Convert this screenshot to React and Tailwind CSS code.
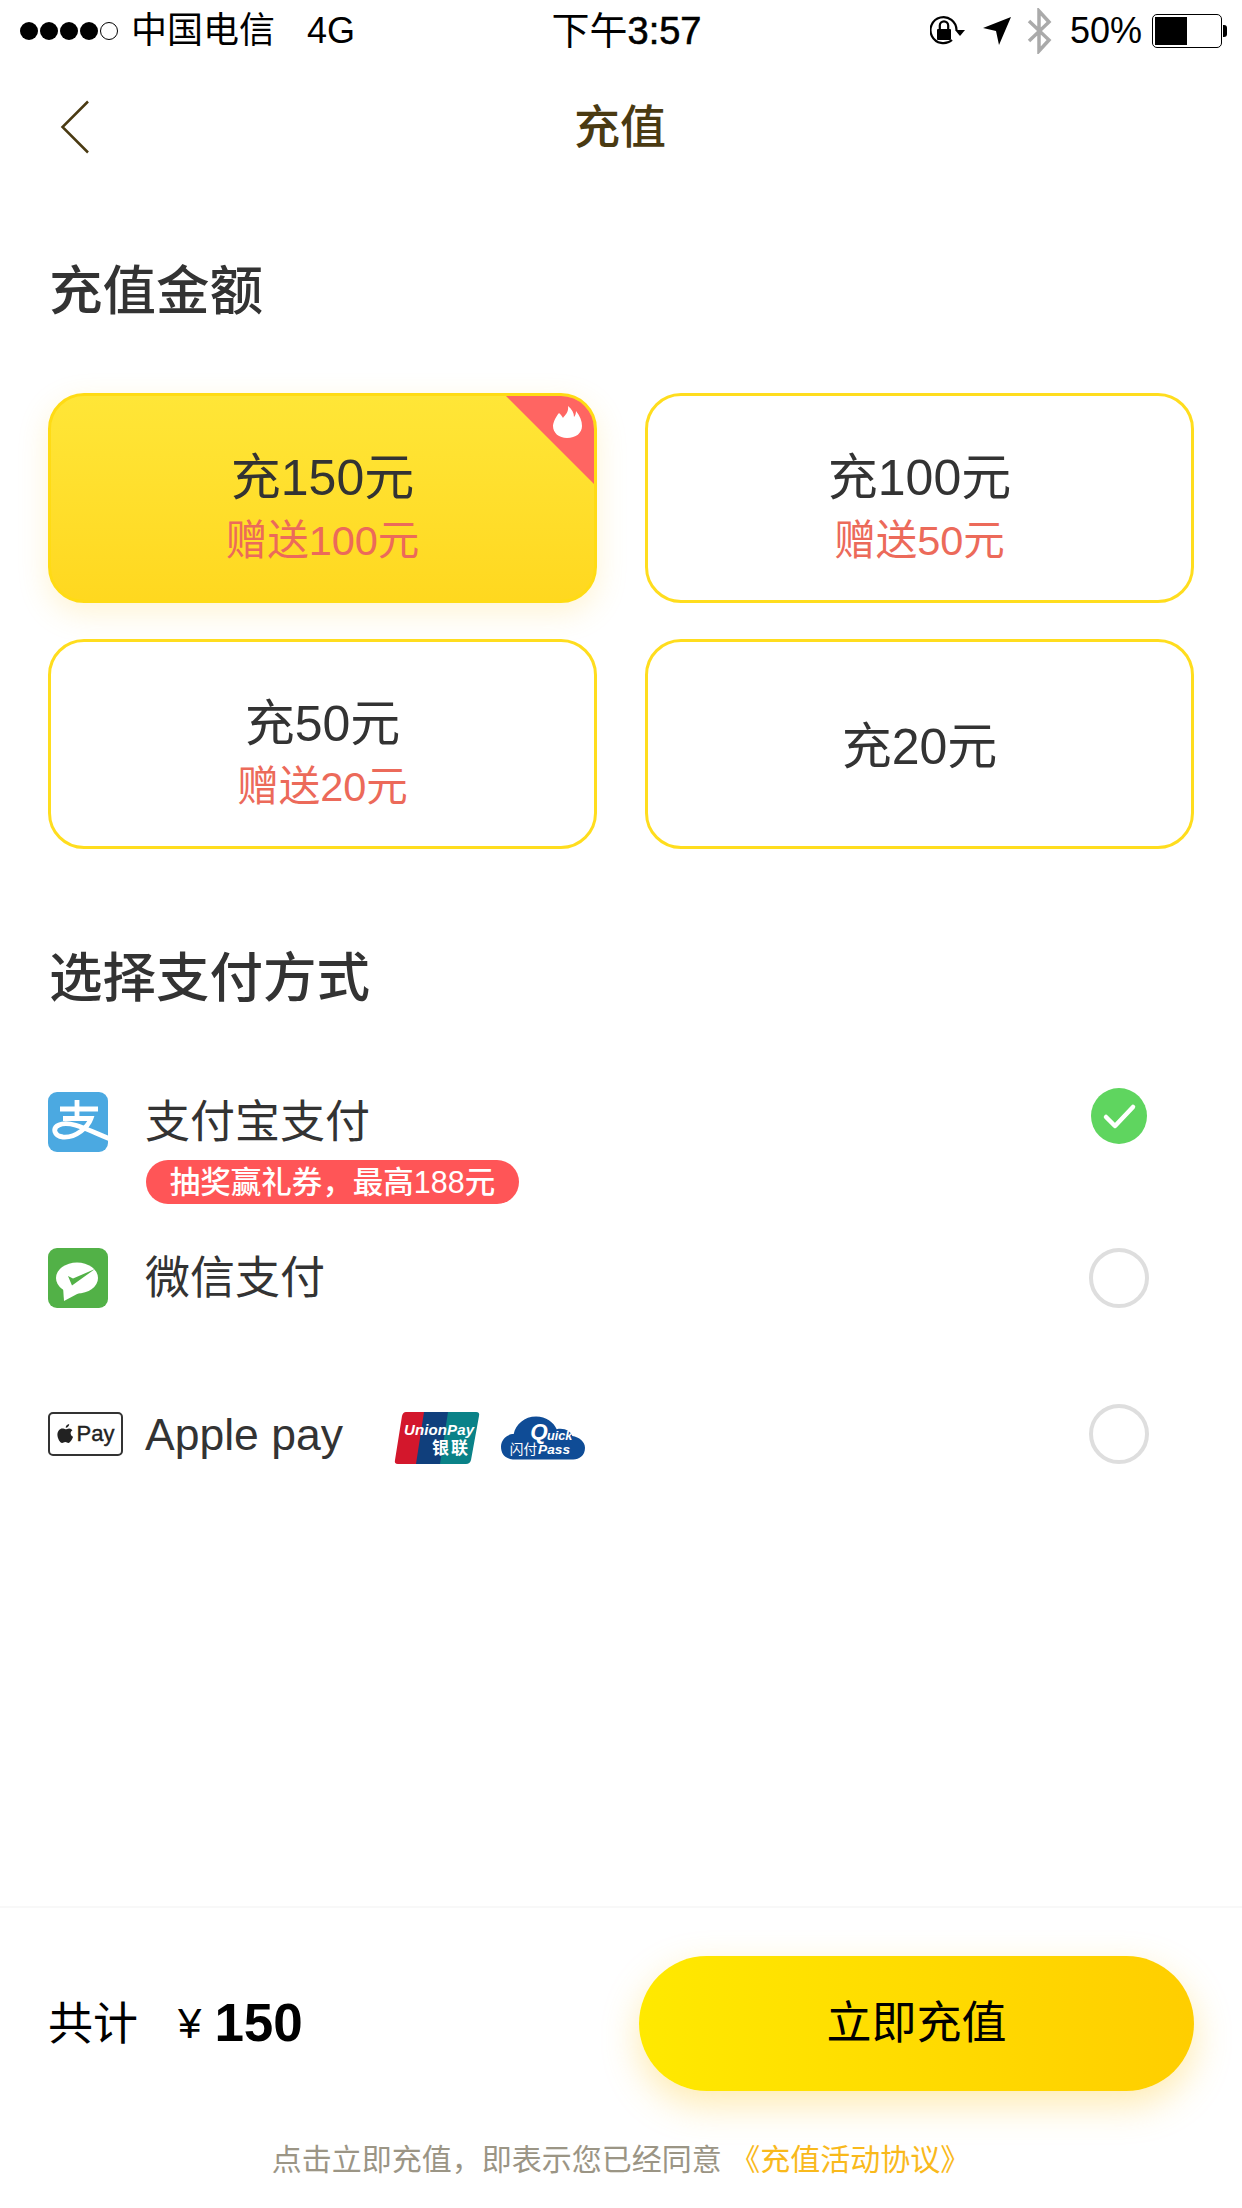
const cjk = '"Liberation Sans","Noto Sans CJK SC",sans-serif';

function Alipay() {
  return (
    <svg width="60" height="60" viewBox="0 0 60 60" className="shrink-0">
      <defs>
        <clipPath id="ali"><rect width="60" height="60" rx="9" /></clipPath>
      </defs>
      <rect width="60" height="60" rx="9" fill="#4BA9E1" />
      <path d="M12 17H50M29 8V26M15 26.5H43C40 35 28 46 15 45C6 44 4 36 11 33C22 28 40 38 62 47" fill="none" stroke="#fff" strokeWidth="4.8" clipPath="url(#ali)" />
    </svg>
  );
}
function Wechat() {
  return (
    <svg width="60" height="60" viewBox="0 0 60 60" className="shrink-0">
      <rect width="60" height="60" rx="9" fill="#52B147" />
      <ellipse cx="29" cy="30" rx="21" ry="15.5" fill="#fff" />
      <path d="M15 39L16 53L31 45Z" fill="#fff" />
      <path d="M20 28L25 30.5L47 21L24 37.5Z" fill="#52B147" />
    </svg>
  );
}
function ApplePay() {
  return (
    <div className="w-[75px] h-[44px] border-2 border-[#333] rounded-[5px] flex items-center justify-center gap-[3px] shrink-0">
      <svg width="17" height="20" viewBox="0 0 16 19">
        <path d="M11.5 0C11.6 1.8 10 3.6 8.2 3.6 8 2 9.7.2 11.5 0ZM8 5C9 5 10 4.2 11.4 4.2 12.8 4.3 14 5 14.6 6 12 7.5 12.5 11 15.2 12.2 14.4 14.5 12.5 18 10.8 18 9.6 18 9.2 17.2 7.8 17.2 6.4 17.2 6 18 4.8 18 2.8 18 .3 13.5.3 10.2.3 6.8 2.6 4.3 5 4.3 6.2 4.3 7.2 5 8 5Z" fill="#222" />
      </svg>
      <span className="text-[22px] leading-none text-[#222] [-webkit-text-stroke:0.4px_#222]">Pay</span>
    </div>
  );
}
function UnionPay() {
  return (
    <svg width="86" height="54" viewBox="0 0 86 54" className="mt-[8px]">
      <path d="M12 1H34L26 53H4Q0 53 1 49L8 5Q9 1 12 1Z" fill="#D3172C" />
      <path d="M30 1H58L50 53H22Z" fill="#103F7C" />
      <path d="M54 1H82Q86 1 85 5L77 49Q76 53 72 53H46Z" fill="#0A8288" />
      <text x="10" y="24" fontFamily="Liberation Sans" fontSize="15" fontWeight="700" fontStyle="italic" fill="#fff" textLength="70">UnionPay</text>
      <text x="38" y="43" fontFamily="Noto Sans CJK SC" fontSize="17" fontWeight="700" fill="#fff" textLength="36">银联</text>
    </svg>
  );
}
function Quick() {
  return (
    <svg width="84" height="46" viewBox="0 0 86 46" className="mt-[8px]">
      <path d="M12 45C3 44 0 38 0 32 0 25 6 19 13 19 15 9 24 1 36 1 46 1 54 7 57 14 64 12 72 16 73 21 80 22 86 27 86 33 86 41 80 45 74 45Z" fill="#0F4C96" />
      <text x="30" y="24" fontFamily="Liberation Sans" fontSize="23" fontWeight="700" fontStyle="italic" fill="#fff">Q</text>
      <text x="47" y="25" fontFamily="Liberation Sans" fontSize="13" fontWeight="700" fontStyle="italic" fill="#fff">uick</text>
      <text x="9" y="39" fontFamily="Noto Sans CJK SC" fontSize="14" fill="#fff">闪付</text>
      <text x="38" y="39" fontFamily="Liberation Sans" fontSize="14" fontWeight="700" fontStyle="italic" fill="#fff">Pass</text>
    </svg>
  );
}
function Radio() {
  return <div className="w-[60px] h-[60px] rounded-full border-[4px] border-[#dedede] shrink-0" />;
}
function Checked() {
  return (
    <svg width="60" height="60" viewBox="0 0 60 60" className="shrink-0">
      <circle cx="30" cy="30" r="28" fill="#5FD55F" />
      <path d="M17 31L26 40L44 21" fill="none" stroke="#fff" strokeWidth="4.5" strokeLinecap="round" strokeLinejoin="round" />
    </svg>
  );
}

function Card({ main, gift, active }) {
  return (
    <div className={active
      ? "relative h-[210px] rounded-[36px] border-[3px] border-[#FFDB14] bg-gradient-to-b from-[#FFE637] to-[#FFD81F] shadow-[0_10px_30px_rgba(255,205,60,0.22)] flex flex-col items-center justify-center overflow-hidden"
      : "relative h-[210px] rounded-[36px] border-[3px] border-[#FFDD1E] bg-white flex flex-col items-center justify-center overflow-hidden"}>
      <div className={gift ? "pt-[14px] text-[50px] leading-[60px] text-[#333]" : "pt-[6px] text-[50px] leading-[60px] text-[#333]"}>{main}</div>
      {gift && <div className="mt-[8px] text-[41.5px] leading-[50px] text-[#EC6A5A] -mb-[3px]">{gift}</div>}
      {active && (
        <svg width="90" height="90" viewBox="0 0 90 90" className="absolute top-0 right-0">
          <path d="M2 0H90V88Z" fill="#FF6562" />
          <path d="M64 10C65 16 61 19 59 22C58 20 57 19 55 17C51 22 49 27 49 30C49 37 55 42 63 42C72 42 78 37 78 30C78 25 76 20 72 15C72 18 71 20 70 21C70 17 68 13 64 10Z" fill="#fff" />
        </svg>
      )}
    </div>
  );
}

export default function App() {
  return (
    <div className="w-[1242px] h-[2208px] bg-white flex flex-col overflow-hidden" style={{ fontFamily: cjk }}>
      {/* status bar */}
      <div className="h-[62px] pl-[20px] pr-[15px] grid grid-cols-3 items-center text-black shrink-0">
        <div className="flex items-center text-[36px] leading-none whitespace-nowrap">
          <div className="flex items-center gap-[2px]">
            {[0, 1, 2, 3].map((i) => (
              <span key={i} className="w-[18px] h-[18px] rounded-full bg-black" />
            ))}
            <span className="w-[18px] h-[18px] rounded-full border-[1.5px] border-black" />
          </div>
          <span className="ml-[13px]">中国电信</span>
          <span className="ml-[32px]">4G</span>
        </div>
        <div className="text-center text-[38px] leading-none pl-[6px] whitespace-nowrap">
          下午<span className="[-webkit-text-stroke:0.6px_black]">3:57</span>
        </div>
        <div className="flex items-center justify-end">
          <svg width="36" height="32" viewBox="0 0 36 32">
            <path d="M26.5 15A13 13 0 1 0 22 25" fill="none" stroke="#000" strokeWidth="2.2" />
            <path d="M25 15h10l-5 6z" fill="#000" />
            <rect x="7" y="14" width="14" height="11" rx="1" fill="#000" />
            <path d="M9.8 14V10.5a4.2 4.2 0 0 1 8.4 0V14" fill="none" stroke="#000" strokeWidth="2.2" />
          </svg>
          <svg width="28" height="30" viewBox="0 0 28 30" className="ml-[17px]">
            <path d="M28 1L16 29L13 15L0 12Z" fill="#000" />
          </svg>
          <svg width="26" height="46" viewBox="0 0 26 46" className="ml-[15px]">
            <path d="M3 13L23 32L13 43V3L23 14L3 33" fill="none" stroke="#aaa" strokeWidth="3.5" />
          </svg>
          <span className="ml-[18px] text-[36px] leading-none">50%</span>
          <div className="ml-[10px] w-[70px] h-[34px] rounded-[5px] border border-black p-[2px] flex shrink-0">
            <div className="w-[32px] bg-black" />
          </div>
          <div className="w-[4px] h-[12px] bg-black rounded-r-[3px] ml-[1px]" />
        </div>
      </div>

      {/* nav */}
      <div className="h-[130px] shrink-0 px-[60px] flex items-center">
        <svg width="30" height="54" viewBox="0 0 30 54">
          <path d="M28 1.5L2.5 27L28 52.5" fill="none" stroke="#4A3A12" strokeWidth="2.5" />
        </svg>
        <div className="flex-1 text-center text-[46px] leading-none font-medium text-[#4A3A12] pr-[32px]">充值</div>
      </div>

      {/* amount */}
      <div className="px-[48px] shrink-0">
        <div className="text-[53.5px] leading-[64px] font-medium text-[#333] pl-[1px] mt-[68px]">充值金额</div>
        <div className="grid grid-cols-2 gap-x-[48px] gap-y-[36px] mt-[69px]">
          <Card active main="充150元" gift="赠送100元" />
          <Card main="充100元" gift="赠送50元" />
          <Card main="充50元" gift="赠送20元" />
          <Card main="充20元" />
        </div>
        <div className="text-[53.5px] leading-[64px] font-medium text-[#333] pl-[1px] mt-[98px]">选择支付方式</div>
      </div>

      {/* pay methods */}
      <div className="px-[48px] mt-[81px] shrink-0">
        <div className="h-[156px] flex items-start">
          <Alipay />
          <div className="ml-[38px] flex-1">
            <div className="pt-[1px] -ml-[1px] text-[45px] leading-[60px] text-[#333]">支付宝支付</div>
            <div className="mt-[7px] w-[373px] h-[44px] rounded-full bg-[#FF5557] text-white text-[30.5px] leading-[44px] text-center font-medium">抽奖赢礼券，最高188元</div>
          </div>
          <div className="-mt-[6px] mr-[45px]"><Checked /></div>
        </div>
        <div className="h-[156px] flex items-start">
          <Wechat />
          <div className="ml-[37px] pt-[1px] flex-1 text-[45px] leading-[60px] text-[#333]">微信支付</div>
          <div className="mr-[45px]"><Radio /></div>
        </div>
        <div className="flex items-center h-[60px]">
          <ApplePay />
          <div className="ml-[22px] pt-[1px] text-[44.5px] leading-[60px] text-[#333] w-[249px] whitespace-nowrap">Apple pay</div>
          <UnionPay />
          <div className="ml-[21px]"><Quick /></div>
          <div className="flex-1" />
          <div className="mr-[45px]"><Radio /></div>
        </div>
      </div>

      <div className="flex-1" />

      {/* footer */}
      <div className="h-[302px] shrink-0 border-t-[2px] border-[#f8f8f8] px-[48px] pt-[47px]">
        <div className="flex items-center">
          <div className="flex-1 flex items-center text-black">
            <span className="text-[45px] leading-[135px] pt-[2px]">共计</span>
            <span className="ml-[40px] text-[42px] leading-none">¥</span>
            <span className="ml-[13px] text-[53px] leading-none font-bold -mt-[3px]">150</span>
          </div>
          <div className="w-[555px] h-[135px] rounded-full bg-gradient-to-r from-[#FFE900] to-[#FFCE00] shadow-[0_14px_36px_rgba(255,205,60,0.4)] flex items-center justify-center text-[45px] text-black">
            立即充值
          </div>
        </div>
        <div className="mt-[46px] text-center text-[30px] leading-[44px] text-[#9B9585] whitespace-nowrap">
          点击立即充值，即表示您已经同意 <span className="text-[#F9B91C]">《充值活动协议》</span>
        </div>
      </div>
    </div>
  );
}
